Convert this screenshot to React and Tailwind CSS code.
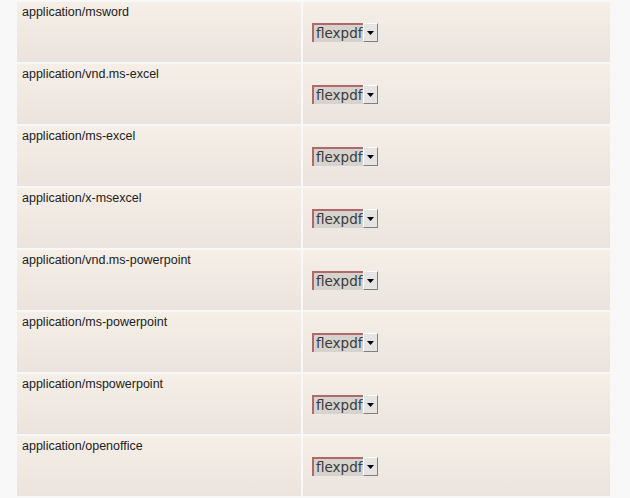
import React from "react";

const types = [
  "application/msword",
  "application/vnd.ms-excel",
  "application/ms-excel",
  "application/x-msexcel",
  "application/vnd.ms-powerpoint",
  "application/ms-powerpoint",
  "application/mspowerpoint",
  "application/openoffice",
];

function FakeSelect() {
  return (
    <div className="inline-flex items-stretch h-[19px]">
      <div className="flex items-center pl-[2px] pr-[1px] bg-[#d6d2ce] border-l-2 border-t-2 border-[#b0686a] text-[13.5px] leading-none text-[#3a3a3a] font-['DejaVu_Sans',sans-serif]">
        flexpdf
      </div>
      <div className="flex items-center justify-center w-[15px] bg-[#e6e4e2] border border-t-white border-l-white border-r-[#808080] border-b-[#808080]">
        <svg width="7" height="4" viewBox="0 0 7 4">
          <path d="M0 0h7L3.5 4z" fill="#000" />
        </svg>
      </div>
    </div>
  );
}

export default function App() {
  return (
    <div className="min-h-[498px] bg-[#f8f8f8] pl-[15px]">
      <table className="border-separate border-spacing-[2px] w-[597px]">
        <tbody>
          {types.map((t) => (
            <tr key={t}>
              <td className="w-[284px] h-[60px] align-top pl-[5px] pr-[6px] pt-[1px] bg-gradient-to-b from-[#f5efe8] to-[#ebe4de] text-[12.5px] text-[#222] font-['Liberation_Sans',Arial,sans-serif]">
                {t}
              </td>
              <td className="h-[60px] align-middle pl-[9px] bg-gradient-to-b from-[#f5efe8] to-[#ebe4de]">
                <FakeSelect />
              </td>
            </tr>
          ))}
        </tbody>
      </table>
    </div>
  );
}
